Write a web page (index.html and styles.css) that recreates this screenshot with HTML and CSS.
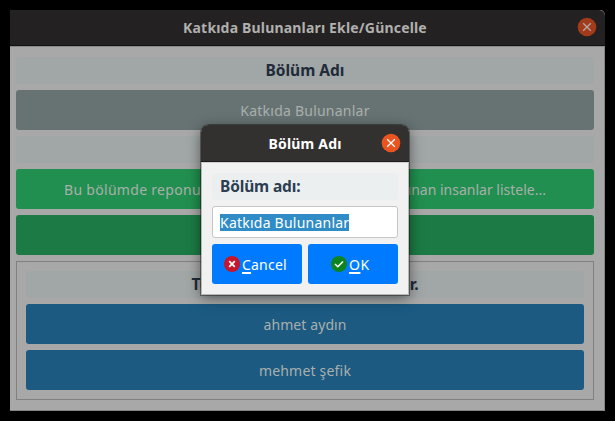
FILE: index.html
```html
<!DOCTYPE html>
<html lang="tr">
<head>
<meta charset="utf-8">
<title>Katkıda Bulunanları Ekle/Güncelle</title>
<link rel="stylesheet" href="styles.css">
</head>
<body>
<main class="window">
  <header class="titlebar"><span class="t-main">Katkıda Bulunanları Ekle/Güncelle</span>
    <svg class="close" viewBox="0 0 20 20"><circle cx="10" cy="10" r="9.3" fill="#a23b1a"/><path d="M6.2 6.2l7.6 7.6M13.8 6.2l-7.6 7.6" stroke="#b5aaa5" stroke-width="1.3"/></svg>
  </header>
  <div class="content">
    <div class="label"><span class="t-head">Bölüm Adı</span></div>
    <div class="button gray"><span class="t-gray">Katkıda Bulunanlar</span></div>
    <div class="label"></div>
    <div class="button green"><span class="t-desc"><span class="t-desc-start">Bu bölümde reponuza</span><span>bulunan insanlar listele...</span></span></div>
    <div class="button darkgreen"></div>
    <section class="group">
      <div class="label"><span class="t-group"><span>Tüm katkıda</span><span>bulunanlar.</span></span></div>
      <div class="button blue"><span class="t-ahmet">ahmet aydın</span></div>
      <div class="button blue"><span class="t-mehmet">mehmet şefik</span></div>
    </section>
  </div>
</main>
<div class="dialog">
  <header class="titlebar"><span class="t-dialog">Bölüm Adı</span>
    <svg class="close" viewBox="0 0 20 20"><circle cx="10" cy="10" r="9.3" fill="#e95420"/><path d="M6.2 6.2l7.6 7.6M13.8 6.2l-7.6 7.6" stroke="#fff" stroke-width="1.3"/></svg>
  </header>
  <div class="dialog-body">
    <div class="label"><span class="t-prompt">Bölüm adı:</span></div>
    <div class="input"><span class="selection">Katkıda Bulunanlar</span></div>
    <div class="actions">
      <div class="action cancel"><svg class="icon" viewBox="0 0 16 16"><circle cx="8" cy="8" r="8" fill="#c7162b"/><path d="M5.2 5.2l5.6 5.6M10.8 5.2l-5.6 5.6" stroke="#fff" stroke-width="1.8"/></svg><span class="t-cancel"><u>C</u>ancel</span></div>
      <div class="action ok"><svg class="icon" viewBox="0 0 16 16"><circle cx="8" cy="8" r="8" fill="#0e8420"/><path d="M4 8l2.8 2.8L12 5.4" fill="none" stroke="#fff" stroke-width="1.5"/></svg><span class="t-ok"><u>O</u>K</span></div>
    </div>
  </div>
</div>
</body>
</html>
```

FILE: styles.css
```css
* { box-sizing: border-box; }
body {
  margin: 0;
  padding: 10px;
  width: 615px;
  height: 421px;
  overflow: hidden;
  background: #000;
  font: 14px/20px "Noto Sans", "Open Sans", sans-serif;
  white-space: nowrap;
}
.window { width: 595px; height: 401px; background: #a8a8a8; border-radius: 0 5px 0 0; border-right: 1px solid #858585; border-bottom: 1px solid #858585; }
.titlebar {
  position: relative;
  display: flex;
  align-items: center;
  justify-content: center;
  height: 36px;
  background: #242122;
  border-bottom: 1px solid #131213;
  color: #b0b0ae;
  font-weight: 700;
  font-size: 14px;
}
.window .titlebar { margin-right: -1px; padding-right: 5px; border-radius: 0 6px 0 0; }
.t-main { letter-spacing: .18px; }
.close { position: absolute; width: 20px; height: 20px; right: 8px; top: 7px; }
.content { display: flex; flex-direction: column; gap: 6px; padding: 10px 10px 0 6px; border-top: 1px solid #898989; }
.label { display: flex; align-items: center; justify-content: center; height: 27px; padding-bottom: 2px; border-radius: 4px; background: #a1a6a7; color: #1f2b38; font-weight: 700; font-size: 15.5px; }
.button { display: flex; align-items: center; justify-content: center; height: 40px; border-radius: 3px; color: #a9b0ac; padding-top: 2px; }
.gray { background: #677373; }
.t-gray, .selection { letter-spacing: .23px; }
.green { background: #218f4f; }
.darkgreen { background: #1c7b44; }
.blue { background: #1c5a82; }
.group { display: flex; flex-direction: column; gap: 6px; height: 139px; padding: 9px; border: 1px solid #808080; }
.t-desc { display: flex; justify-content: space-between; width: 482px; }
.t-desc-start { letter-spacing: .3px; }
.t-ahmet { letter-spacing: .1px; }
.t-mehmet { letter-spacing: .2px; }
.t-group { display: flex; justify-content: space-between; width: 227px; }

.dialog {
  position: absolute;
  left: 201px;
  top: 125px;
  width: 208px;
  height: 170px;
  background: #f1f1f1;
  border-radius: 8px 8px 0 0;
  box-shadow: 0 0 0 1px rgba(0,0,0,.35), 0 3px 14px rgba(0,0,0,.5);
}
.dialog .titlebar { height: 37px; padding-top: 2px; background: #333030; border-bottom-color: #1c1a1a; border-radius: 7px 7px 0 0; color: #fff; }
.dialog .close { top: 8px; }
.t-dialog { letter-spacing: .2px; }
.dialog-body { display: flex; flex-direction: column; gap: 6px; height: 133px; padding: 10px 10px 0; border: 1px solid #b9b7b6; border-top-color: #cecece; }
.dialog .label { justify-content: flex-start; padding-left: 8px; background: #ebeff0; color: #2c3e50; }
.t-prompt { letter-spacing: -.15px; }
.input { display: flex; align-items: center; height: 32px; padding: 0 0 0 7px; background: #fff; border: 1px solid #c6c6c6; border-radius: 3px; }
.selection { background: #308cc6; color: #fff; line-height: 17px; }
.actions { display: grid; grid-template-columns: 1fr 1fr; gap: 6px; }
.action { display: flex; align-items: center; justify-content: flex-start; gap: 2px; height: 40px; border-radius: 3px; background: #007bff; color: #fff; }
.cancel { padding-left: 12px; letter-spacing: .2px; }
.ok { padding-left: 23px; letter-spacing: .5px; }
.action span { padding-top: 2px; }
.icon { width: 16px; height: 16px; }
u { text-decoration-thickness: 2px; text-underline-offset: 2px; }
```
